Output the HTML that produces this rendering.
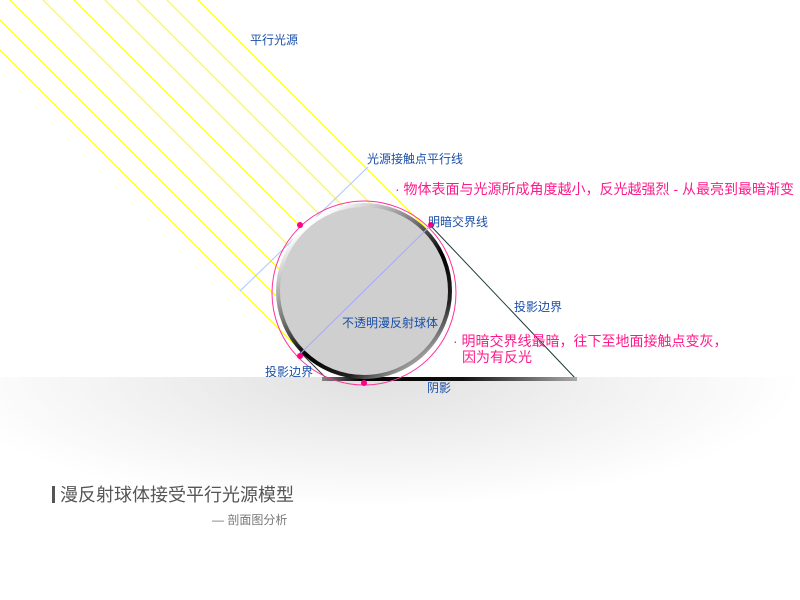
<!DOCTYPE html>
<html><head><meta charset="utf-8"><style>
html,body{margin:0;padding:0;width:800px;height:600px;overflow:hidden;background:#fff}
.t{font-family:"Liberation Sans","Noto Sans CJK SC",sans-serif}
</style></head><body>
<svg id="s" width="800" height="600" xmlns="http://www.w3.org/2000/svg" style="position:absolute;left:0;top:0">
<defs>
<radialGradient id="g" cx="370" cy="378" r="430" gradientUnits="userSpaceOnUse" gradientTransform="translate(370 378) scale(1 0.3) translate(-370 -378)">
<stop offset="0" stop-color="#e0e0e0"/><stop offset="0.6" stop-color="#f3f3f3"/><stop offset="1" stop-color="#fff"/></radialGradient>
<linearGradient id="sh" x1="0" x2="1"><stop offset="0" stop-color="#888"/><stop offset="0.15" stop-color="#000"/><stop offset="0.55" stop-color="#111"/><stop offset="1" stop-color="#aaa"/></linearGradient>
<linearGradient id="rim" x1="0.2" y1="0.1" x2="0.8" y2="0.9"><stop offset="0" stop-color="#fff"/><stop offset="0.35" stop-color="#777"/><stop offset="0.6" stop-color="#000"/><stop offset="0.85" stop-color="#222"/><stop offset="1" stop-color="#999"/></linearGradient>
</defs>
<rect x="0" y="377" width="800" height="223" fill="url(#g)"/>
<g id="rays" stroke="#ffff00" stroke-width="1"></g>
<line x1="240" y1="291" x2="368" y2="167" stroke="#a9c8ff" stroke-width="1"/>
<polyline points="430,225 576,379" fill="none" stroke="#1e3a3a" stroke-width="1"/>
<line x1="300" y1="352" x2="327" y2="379" stroke="#333" stroke-width="1"/>
<rect x="322" y="377" width="255" height="4" fill="url(#sh)"/>
<circle cx="364" cy="293" r="92" fill="none" stroke="#ff3399" stroke-width="1"/>
<circle cx="364" cy="291" r="86" fill="#cfcfcf" stroke="url(#rim)" stroke-width="4"/>
<line x1="430" y1="226" x2="300" y2="354" stroke="#aaa8ff" stroke-width="1"/>
<circle cx="300" cy="225" r="3" fill="#ff0088"/>
<circle cx="431" cy="225" r="3" fill="#ff0088"/>
<circle cx="300" cy="356" r="3" fill="#ff0088"/>
<circle cx="364" cy="383" r="3" fill="#ff0088"/>
<g class="t" font-size="12" fill="#1a4fa8">
<text x="250" y="44">平行光源</text>
<text x="367" y="163">光源接触点平行线</text>
<text x="428" y="226">明暗交界线</text>
<text x="514" y="311">投影边界</text>
<text x="342" y="327">不透明漫反射球体</text>
<text x="265" y="376">投影边界</text>
<text x="427" y="392">阴影</text>
</g>
<g class="t" font-size="14" fill="#ff1a8c">
<text x="395" y="194">· 物体表面与光源所成角度越小，反光越强烈 - 从最亮到最暗渐变</text>
<text x="453" y="346">· 明暗交界线最暗，往下至地面接触点变灰，</text>
<text x="462" y="362">因为有反光</text>
</g>
<rect x="52" y="486" width="3" height="17" fill="#555"/>
<text class="t" x="60" y="501" font-size="18" fill="#555">漫反射球体接受平行光源模型</text>
<text class="t" x="212" y="524" font-size="12" fill="#777">— 剖面图分析</text>
</svg>
<script>
var g=document.getElementById('rays'),R=88,cx=364,cy=291;
var starts=[[10,0],[43,0],[74,0],[105,0],[137,0],[167,0],[198,0],[0,20],[0,50]];
starts.forEach(function(p){
 var c=p[0]-p[1],d=c-(cx-cy);
 var disc=Math.max(0,2*R*R-d*d);
 var u=(d-Math.sqrt(disc))/2,v=u-d;
 var l=document.createElementNS('http://www.w3.org/2000/svg','line');
 l.setAttribute('x1',p[0]);l.setAttribute('y1',p[1]);
 l.setAttribute('x2',cx+u);l.setAttribute('y2',cy+v);g.appendChild(l);
});
</script>
</body></html>
